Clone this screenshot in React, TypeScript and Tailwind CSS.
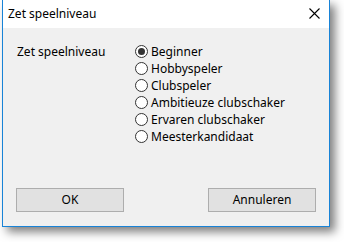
const levels = [
  "Beginner",
  "Hobbyspeler",
  "Clubspeler",
  "Ambitieuze clubschaker",
  "Ervaren clubschaker",
  "Meesterkandidaat",
];

function Radio({ checked }: { checked: boolean }) {
  return (
    <span className="w-[13px] h-[13px] rounded-full border border-[#333] bg-white flex items-center justify-center shrink-0">
      {checked && <span className="w-[7px] h-[7px] rounded-full bg-[#333]" />}
    </span>
  );
}

export default function App() {
  const selected = 0;
  return (
    <div
      className="w-[344px] h-[242px] bg-white text-black text-[12px] overflow-hidden"
      style={{ fontFamily: "'Noto Sans', 'Open Sans', sans-serif" }}
    >
      <div className="ml-[2px] w-[328px] h-[227px] border border-t-0 border-[#1883d7] bg-[#f0f0f0] flex flex-col shadow-[5px_5px_9px_rgba(0,0,0,0.5)]">
        {/* title bar */}
        <div className="h-[28px] bg-white flex items-center justify-between pl-[5px] pr-[9px] shrink-0">
          <span className="leading-none">Zet speelniveau</span>
          <svg width="11" height="11" viewBox="0 0 11 11" className="-mt-[1px]">
            <path d="M0.5 0.5 L10.5 10.5 M10.5 0.5 L0.5 10.5" stroke="#000" strokeWidth="1.1" />
          </svg>
        </div>

        {/* body */}
        <div className="flex pt-[15px] pl-[14px]">
          <div className="w-[118px] leading-[17px]">Zet speelniveau</div>
          <div className="flex flex-col">
            {levels.map((l, i) => (
              <label key={l} className="flex items-center gap-[3px] h-[17px]">
                <Radio checked={i === selected} />
                <span className="leading-none">{l}</span>
              </label>
            ))}
          </div>
        </div>

        <div className="flex justify-between px-[13px] mt-auto mb-[14px]">
          <button className="w-[108px] h-[24px] bg-[#e1e1e1] border border-[#adadad]">OK</button>
          <button className="w-[108px] h-[24px] bg-[#e1e1e1] border border-[#adadad]">Annuleren</button>
        </div>
      </div>
    </div>
  );
}
